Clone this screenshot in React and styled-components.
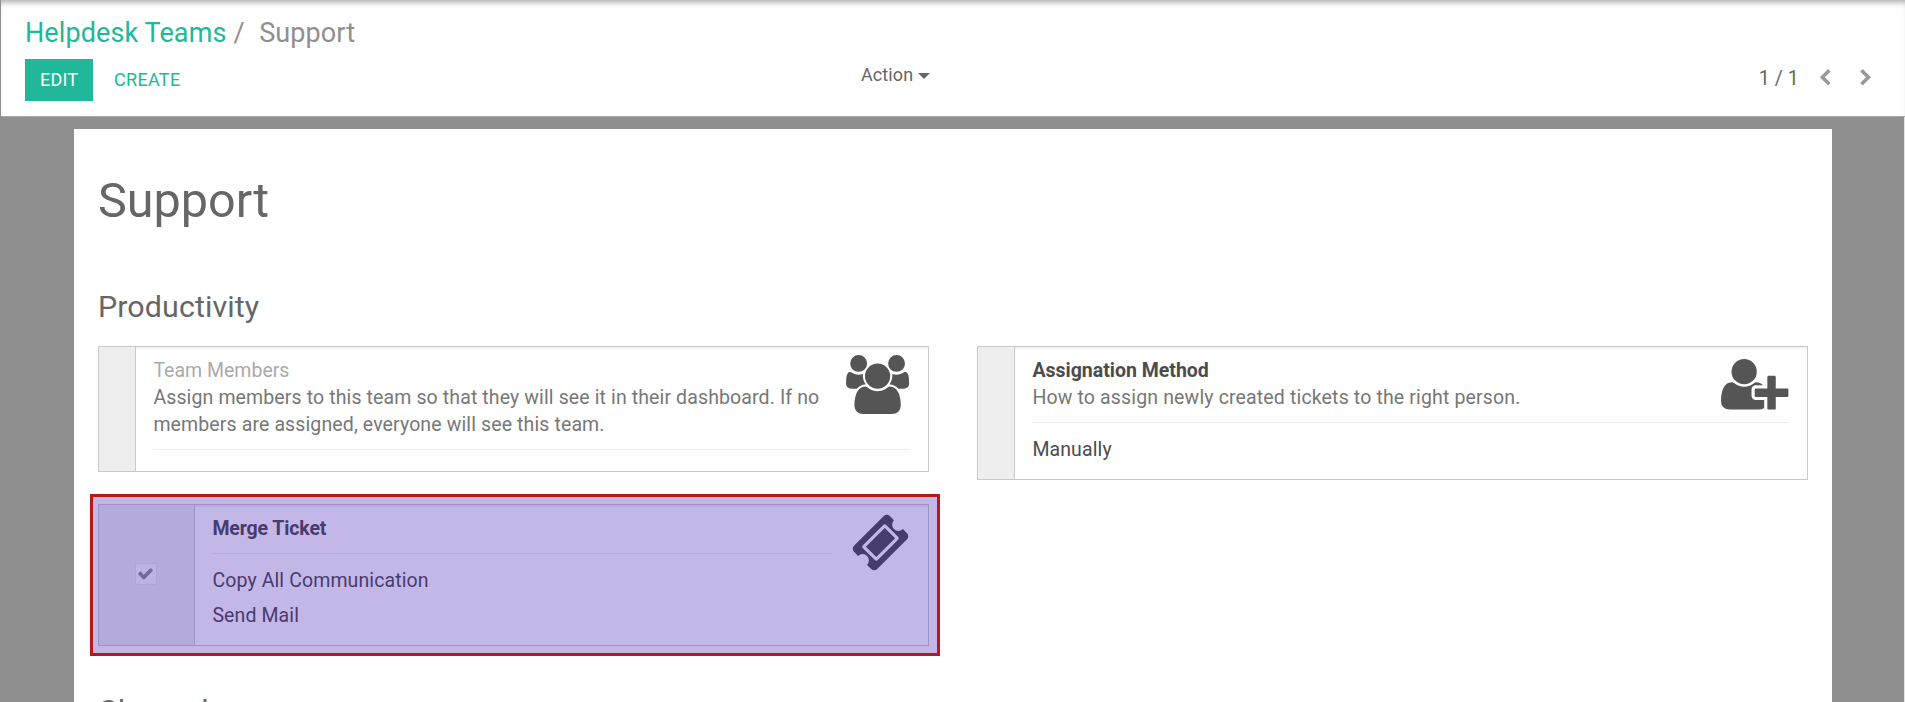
import React from "react";
import styled, { createGlobalStyle } from "styled-components";

const GlobalStyle = createGlobalStyle`
  * { box-sizing: border-box; }
  body { margin: 0; overflow: hidden; }
`;

const Page = styled.div`
  height: 702px;
  overflow: hidden;
  border-left: 1px solid #8f8f8f;
  background: #fff;
  color: #4c4c4c;
  font-family: Roboto, "Liberation Sans", sans-serif;
  font-size: 19.5px;
  line-height: 27px;
  display: flex;
  flex-direction: column;
`;

const ControlPanel = styled.header`
  flex: none;
  height: 117px;
  padding: 15px 0 0 24px;
  border-bottom: 1px solid #a8a8a8;
  background: #fff;
  box-shadow: inset 0 6px 6px -4px rgba(0, 0, 0, 0.36);
`;

const Breadcrumb = styled.nav`
  display: flex;
  height: 36px;
  font-size: 27px;
  line-height: 36px;
  letter-spacing: 0.1px;
  color: #8f8f8f;
`;

const CrumbLink = styled.a`
  color: #21b799;
`;

const Slash = styled.span`
  padding: 0 14.5px 0 7px;
`;

const Toolbar = styled.div`
  display: grid;
  grid-template-columns: 836px 1fr auto;
  align-items: start;
  height: 42px;
  margin-top: 8px;
`;

const Buttons = styled.div`
  display: flex;
  gap: 6px;
`;

const Button = styled.button`
  height: 42px;
  padding: 0 15px 2px;
  border: 0;
  background: ${(p) => (p.$primary ? "#21b799" : "transparent")};
  color: ${(p) => (p.$primary ? "#fff" : "#21b799")};
  width: ${(p) => (p.$primary ? "68px" : "auto")};
  font: 18px Roboto, "Liberation Sans", sans-serif;
  letter-spacing: ${(p) => (p.$primary ? "0.2px" : "0.3px")};
  white-space: nowrap;
`;

const ActionMenu = styled.div`
  display: flex;
  align-items: center;
  height: 30px;
  gap: 5px;
  font-size: 18px;
  letter-spacing: 0.1px;
  color: #666;
`;

const Caret = styled.span`
  margin-top: 3px;
  border: 6px solid transparent;
  border-top-color: #666;
  border-bottom: 0;
`;

const Pager = styled.div`
  display: flex;
  align-items: center;
  height: 38px;
  padding-right: 30px;
  font-size: 19.5px;
  letter-spacing: 0.1px;
  color: #666;
`;

const PagerIcon = styled.svg`
  width: 17.8px;
  height: 17.8px;
  margin-left: ${(p) => p.$gap}px;
  fill: #999;
`;

const Backdrop = styled.main`
  flex: 1;
  min-height: 0;
  padding: 12px 72px 0 73px;
  background: #8f8f8f;
  border-right: 1px solid #e4e4e4;
`;

const Sheet = styled.section`
  height: 700px;
  padding: 42px 24px 0;
  background: #fff;
`;

const TeamName = styled.h1`
  margin: 0;
  font-size: 48.5px;
  line-height: 60px;
  font-weight: 400;
  color: #666;
`;

const SectionTitle = styled.h2`
  margin: ${(p) => p.$top}px 0 19px;
  font-size: 30.4px;
  line-height: 40px;
  font-weight: 400;
  letter-spacing: 0.1px;
  color: #666;
`;

const Settings = styled.div`
  display: grid;
  grid-template-columns: 831px 831px;
  column-gap: 48px;
  row-gap: 14px;
  align-items: start;
`;

const Card = styled.article`
  display: flex;
  height: ${(p) => p.$height}px;
  border: 1px solid ${(p) => (p.$marked ? "#9f93c6" : "#c9c9c9")};
  color: ${(p) => (p.$marked ? "#483b6e" : "#4c4c4c")};
  fill: ${(p) => (p.$marked ? "#483b6e" : "#555")};
  --rule: ${(p) => (p.$marked ? "#b8acdc" : "#ececec")};
`;

const Side = styled.div`
  flex: none;
  display: flex;
  align-items: center;
  justify-content: center;
  width: ${(p) => (p.$marked ? 96 : 37)}px;
  border-right: 1px solid ${(p) => (p.$marked ? "#9f93c6" : "#c9c9c9")};
  background: ${(p) => (p.$marked ? "#b6aadb" : "#eee")};
`;

const Body = styled.div`
  flex: 1;
  min-width: 0;
  padding: 10px 18.500px 0 17.400px;
  box-shadow: inset 0 3px 2px -1px rgba(0, 0, 0, 0.06);
`;

const Row = styled.div`
  display: flex;
  justify-content: space-between;
  gap: 18px;
`;

const Text = styled.div`
  flex: 1;
  min-width: 0;
  white-space: nowrap;
`;

const Label = styled.div`
  font-weight: ${(p) => (p.$muted ? 400 : 700)};
  color: ${(p) => (p.$muted ? "#aaa" : "inherit")};
  letter-spacing: ${(p) => p.$spacing || 0}px;
`;

const Description = styled.div`
  letter-spacing: ${(p) => p.$spacing}px;
  color: #777;
`;

const Value = styled.div`
  margin-bottom: 8px;
  letter-spacing: 0.11px;
`;

const Rule = styled.hr`
  height: 1px;
  margin: 11px 0 13px;
  border: 0;
  background: var(--rule);
`;

const CardIcon = styled.svg`
  flex: none;
  width: ${(p) => p.$w}px;
  height: ${(p) => p.$h}px;
  margin-top: ${(p) => p.$top}px;
`;

const Highlight = styled.div`
  margin: 0 -11px 0 -8px;
  padding: 7px 8px 7px 5px;
  border: 3px solid #b81818;
  background: #c3b7e8;
`;

const Checkbox = styled.span`
  display: flex;
  align-items: center;
  justify-content: center;
  width: 22px;
  height: 22px;
  margin: -2px 1px 0 0;
  padding: 0 1px 1px 0;
  border: 1px solid #b1a5d5;
  background: #beb2e3;
  fill: #75689f;
`;

const UsersIcon = () => (
  <CardIcon $w={63.2} $h={59} $top={-2.4} viewBox="0 -256 1920 1792">
    <path d="M593 640q-162 5-265 128H194q-82 0-138-40.500T0 609q0-353 124-353 6 0 43.500 21t97.500 42.500T384 341q67 0 133-23-5 37-5 66 0 139 81 256zm1071 637q0 120-73 189.500t-194 69.500H523q-121 0-194-69.500T256 1277q0-53 3.500-103.500t14-109T300 956t43-97.500 62-81 85.500-53.500T602 704q10 0 43 21.500t73 48 107 48 135 21.500 135-21.500 107-48 73-48 43-21.500q61 0 111.500 20t85.500 53.500 62 81 43 97.500 26.500 108.500 14 109 3.500 103.500zM640 0q0 106-75 181t-181 75-181-75-75-181 75-181 181-75 181 75 75 181zm704 384q0 159-112.500 271.500T960 768 688.500 655.500 576 384t112.500-271.500T960 0t271.500 112.500T1344 384zm576 225q0 78-56 118.500t-138 40.500h-134q-103-123-265-128 81-117 81-256 0-29-5-66 66 23 133 23 59 0 119-21.500t97.500-42.500 43.500-21q124 0 124 353zm-128-609q0 106-75 181t-181 75-181-75-75-181 75-181 181-75 181 75 75 181z" />
  </CardIcon>
);

const UserPlusIcon = () => (
  <CardIcon $w={67.4} $h={50.6} $top={2} viewBox="0 0 2048 1536">
    <path d="M704 768q-159 0-271.500-112.500T320 384t112.500-271.500T704 0t271.500 112.500T1088 384 975.500 655.500 704 768zm960 128h352q13 0 22.500 9.500t9.500 22.500v192q0 13-9.500 22.500t-22.500 9.500h-352v352q0 13-9.500 22.500t-22.500 9.500h-192q-13 0-22.500-9.500t-9.500-22.500v-352h-352q-13 0-22.500-9.500t-9.500-22.500V928q0-13 9.500-22.500t22.500-9.500h352V544q0-13 9.500-22.500t22.500-9.500h192q13 0 22.500 9.500t9.500 22.500v352zm-736 224q0 52 38 90t90 38h256v238q-68 50-171 50H267q-121 0-194-69T0 1277q0-53 3.500-103.500t14-109T44 956t43-97.500 62-81 85.500-53.500T346 704q19 0 39 17 79 61 154.500 91.500T704 843t164.500-30.500T1023 721q20-17 39-17 132 0 217 96h-223q-52 0-90 38t-38 90v192z" />
  </CardIcon>
);

const TicketIcon = () => (
  <CardIcon $w={59} $h={59} $top={-2.2} viewBox="0 0 1792 1792">
    <path d="M1024 452l316 316-572 572-316-316zm-211 979l618-618q19-19 19-45t-19-45l-362-362q-18-18-45-18t-45 18L361 979q-19 19-19 45t19 45l362 362q18 18 45 18t45-18zm889-637l-907 908q-37 37-90.500 37t-90.500-37l-126-126q56-56 56-136t-56-136-136-56-136 56L91 1179q-37-37-37-90.500T91 998L998 92q37-37 90.500-37t90.500 37l125 125q-56 56-56 136t56 136 136 56 136-56l126 125q37 37 37 90.500t-37 90.500z" />
  </CardIcon>
);

export default function App() {
  return (
    <Page>
      <GlobalStyle />
      <ControlPanel>
        <Breadcrumb>
          <CrumbLink>Helpdesk Teams</CrumbLink>
          <Slash>/</Slash>
          <span>Support</span>
        </Breadcrumb>
        <Toolbar>
          <Buttons>
            <Button $primary>EDIT</Button>
            <Button>CREATE</Button>
          </Buttons>
          <ActionMenu>
            Action
            <Caret />
          </ActionMenu>
          <Pager>
            1 / 1
            <PagerIcon $gap={17.5} viewBox="0 0 1792 1792">
              <path d="M1427 301L896 832l531 531q19 19 19 45t-19 45l-166 166q-19 19-45 19t-45-19L429 877q-19-19-19-45t19-45L1171 45q19-19 45-19t45 19l166 166q19 19 19 45t-19 45z" />
            </PagerIcon>
            <PagerIcon $gap={23} viewBox="0 0 1792 1792">
              <path d="M1363 877l-742 742q-19 19-45 19t-45-19l-166-166q-19-19-19-45t19-45l531-531-531-531q-19-19-19-45t19-45L531 45q19-19 45-19t45 19l742 742q19 19 19 45t-19 45z" />
            </PagerIcon>
          </Pager>
        </Toolbar>
      </ControlPanel>
      <Backdrop>
        <Sheet>
          <TeamName>Support</TeamName>
          <SectionTitle $top={56}>Productivity</SectionTitle>
          <Settings>
            <Card $height={126}>
              <Side />
              <Body>
                <Row>
                  <Text>
                    <Label $muted>Team Members</Label>
                    <Description $spacing={0.12}>
                      Assign members to this team so that they will see it in their dashboard. If no
                      <br />
                      members are assigned, everyone will see this team.
                    </Description>
                  </Text>
                  <UsersIcon />
                </Row>
                <Rule />
              </Body>
            </Card>
            <Card $height={134}>
              <Side />
              <Body>
                <Row>
                  <Text>
                    <Label>Assignation Method</Label>
                    <Description $spacing={0.15}>
                      How to assign newly created tickets to the right person.
                    </Description>
                  </Text>
                  <UserPlusIcon />
                </Row>
                <Rule />
                <Value>Manually</Value>
              </Body>
            </Card>
            <Highlight>
              <Card $height={142} $marked>
                <Side $marked>
                  <Checkbox>
                    <svg width="17" height="17" viewBox="0 0 1792 1792">
                      <path d="M1671 566q0 40-28 68l-724 724-136 136q-28 28-68 28t-68-28l-136-136-362-362q-28-28-28-68t28-68l136-136q28-28 68-28t68 28l294 295 656-657q28-28 68-28t68 28l136 136q28 28 28 68z" />
                    </svg>
                  </Checkbox>
                </Side>
                <Body>
                  <Row>
                    <Text>
                      <Label $spacing={-0.12}>Merge Ticket</Label>
                      <Rule />
                      <Value>Copy All Communication</Value>
                      <Value>Send Mail</Value>
                    </Text>
                    <TicketIcon />
                  </Row>
                </Body>
              </Card>
            </Highlight>
          </Settings>
          <SectionTitle $top={35}>Channels</SectionTitle>
        </Sheet>
      </Backdrop>
    </Page>
  );
}
